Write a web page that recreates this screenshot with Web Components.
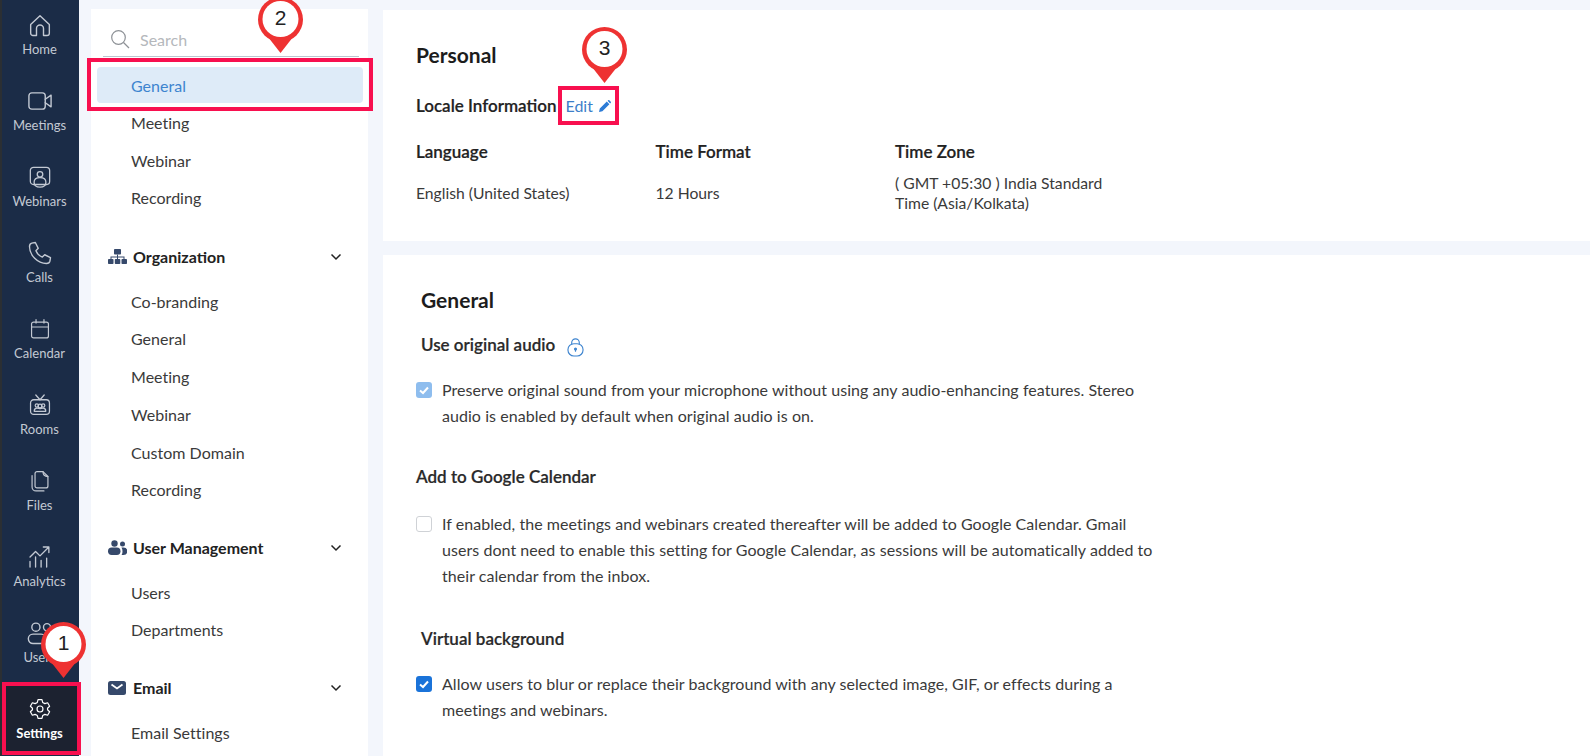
<!DOCTYPE html>
<html><head><meta charset="utf-8"><title>Settings</title>
<style>
html,body{margin:0;height:100%;overflow:hidden;background:#f3f6fc;font-family:Lato,"Noto Sans",sans-serif}
</style></head><body>
<app-shell>
  <nav-rail slot="rail">
    <rail-item label="Home" icon="home"></rail-item>
    <rail-item label="Meetings" icon="video"></rail-item>
    <rail-item label="Webinars" icon="webinar"></rail-item>
    <rail-item label="Calls" icon="phone"></rail-item>
    <rail-item label="Calendar" icon="cal"></rail-item>
    <rail-item label="Rooms" icon="tv"></rail-item>
    <rail-item label="Files" icon="files"></rail-item>
    <rail-item label="Analytics" icon="chart"></rail-item>
    <rail-item label="Users" icon="users"></rail-item>
    <rail-item label="Settings" icon="gear" active></rail-item>
  </nav-rail>
  <side-menu slot="menu">
    <search-box></search-box>
    <menu-link active>General</menu-link>
    <menu-link>Meeting</menu-link>
    <menu-link>Webinar</menu-link>
    <menu-link>Recording</menu-link>
    <menu-group label="Organization" icon="org" style="margin-top:20.7px">
      <menu-link>Co-branding</menu-link>
      <menu-link>General</menu-link>
      <menu-link>Meeting</menu-link>
      <menu-link>Webinar</menu-link>
      <menu-link>Custom Domain</menu-link>
      <menu-link>Recording</menu-link>
    </menu-group>
    <menu-group label="User Management" icon="people">
      <menu-link>Users</menu-link>
      <menu-link>Departments</menu-link>
    </menu-group>
    <menu-group label="Email" icon="mail">
      <menu-link>Email Settings</menu-link>
    </menu-group>
  </side-menu>
  <personal-card slot="main"></personal-card>
  <general-card slot="main"></general-card>
  <red-box slot="over" style="left:2px;top:682px;width:79px;height:73px"></red-box>
  <red-box slot="over" style="left:87px;top:58px;width:286px;height:53px"></red-box>
  <red-box slot="over" style="left:558px;top:86px;width:61px;height:39px"></red-box>
  <call-out slot="over" n="1" style="left:41px;top:622px"></call-out>
  <call-out slot="over" n="2" style="left:258px;top:-3px"></call-out>
  <call-out slot="over" n="3" style="left:582px;top:27px"></call-out>
</app-shell>
<script>
const sc=(s,b)=>`<g transform="translate(12 12) scale(${s}) translate(-12 -12)">${b}</g>`;
const ICONS={
home:'<path d="M4 11.500 12 4l8 7.500V19a2 2 0 0 1-2 2h-3v-6a3 3 0 0 0-6 0v6H6a2 2 0 0 1-2-2z"/>',
video:'<rect x="2.500" y="5" width="14" height="14" rx="2.500"/><path d="M16.500 10.500 21.500 7v10l-5-3.500"/>',
webinar:sc(.92,'<rect x="3" y="3" width="18" height="16" rx="3"/><circle cx="12" cy="9.500" r="2.600"/><path d="M6.500 17c0-3 2.500-4.500 5.500-4.500s5.500 1.500 5.500 4.500c0 3-2.500 4.500-5.500 4.500S6.500 20 6.500 17z"/>'),
phone:'<path d="M5 3.500 8 3l2.500 5-2 2c1 2.500 3 4.500 5.500 5.500l2-2 5 2.500-.5 3c-.3 1.500-1.500 2-3 2C10 21 3 14 3 6.500c0-1.500.5-2.700 2-3z"/>',
cal:sc(.85,'<rect x="3.500" y="5" width="17" height="16" rx="2"/><path d="M3.500 10h17M8 2.500V6M16 2.500V6"/>'),
tv:sc(.9,'<rect x="3" y="7" width="18" height="14" rx="3"/><path d="M8 2.500 12 7l4-4.500"/><circle cx="9" cy="12.500" r="1.600"/><circle cx="15" cy="12.500" r="1.600"/><circle cx="12" cy="13" r="1.800"/><path d="M6.500 18c0-2 1-3 2.500-3s2 .5 3 .5 1.500-.5 3-.5 2.500 1 2.500 3z"/>'),
files:sc(.85,'<path d="M9 2.500h6l5 5V17a2 2 0 0 1-2 2H9a2 2 0 0 1-2-2V4.500a2 2 0 0 1 2-2z"/><path d="M15 2.500c0 3 1.500 5 5 5"/><path d="M4 6.500V18a4 4 0 0 0 4 4h8"/>'),
chart:sc(.95,'<path d="M3 21v-5M8 21v-9M13 21v-6M18 21v-8M3 12l5-5 4 4 8-8M15 3h5v5"/>'),
users:'<circle cx="8.500" cy="7" r="3.500"/><circle cx="18" cy="7" r="3"/><rect x="2" y="13" width="15" height="8" rx="4"/><path d="M17 13h1.500a4 4 0 0 1 4 4"/>',
gear:sc(.85,'<circle cx="12" cy="12" r="3"/><path d="M10 2.500h4l.7 2.900 2.200 1.200 2.800-.9 2 3.500-2.100 2v1.600l2.100 2-2 3.500-2.800-.9-2.200 1.200-.7 2.900h-4l-.7-2.900-2.200-1.200-2.800.9-2-3.500 2.100-2v-1.600l-2.100-2 2-3.500 2.800.9 2.200-1.200z"/>')
};
const GROUP={
org:'<g fill="#36496b"><rect x="6" y="0" width="7" height="5.500" rx=".8"/><rect x="0" y="10" width="5.500" height="5" rx=".8"/><rect x="6.800" y="10" width="5.500" height="5" rx=".8"/><rect x="13.500" y="10" width="5.500" height="5" rx=".8"/><path d="M9 5.500h1v2h6.500v3h-1V8.500H10v2H9v-2H3.500v2h-1v-3H9z"/></g>',
people:'<g fill="#36496b"><circle cx="6.500" cy="3.500" r="3.200"/><circle cx="14.500" cy="4" r="2.500"/><rect x="0" y="7.500" width="12.500" height="7.500" rx="3.700"/><path d="M13.500 7.500h2a3.500 3.500 0 0 1 0 7.500h-2c.8-1 1-2.300 1-3.800s-.3-2.700-1-3.700z"/></g>',
mail:'<rect x="0" y="1" width="18" height="14" rx="2.500" fill="#36496b"/><path d="M3.500 4.500 9 8.500l5.500-4" fill="none" stroke="#fff" stroke-width="1.800"/>'
};
function el(tag,html){customElements.define(tag,class extends HTMLElement{
  connectedCallback(){if(!this.shadowRoot){this.attachShadow({mode:'open'}).innerHTML=typeof html==='function'?html(this):html}}
})}
el('app-shell',`<style>
:host{display:flex;width:1590px;height:756px;overflow:hidden;position:relative;background:#f3f6fc}
.menu{margin:9px 15px 0 12px;width:277px;flex:none;background:#fff;overflow:hidden}
.main{flex:1;min-width:0;display:flex;flex-direction:column;gap:14px;padding:10px 0 1px}
</style><slot name="rail"></slot><div class="menu"><slot name="menu"></slot></div><div class="main"><slot name="main"></slot></div><slot name="over"></slot>`);
el('nav-rail',`<style>
:host{display:flex;flex-direction:column;width:79px;flex:none;height:756px;overflow:hidden;background:#1b2c47;border-left:2px solid #2b2f33;box-sizing:border-box;padding-top:9px}
</style><slot></slot>`);
el('rail-item',h=>`<style>
:host{display:flex;flex:none;flex-direction:column;align-items:center;height:76px;box-sizing:border-box;padding-top:2px;color:#c3c9d3;font-size:13px;line-height:16px;margin-left:-2px}
:host([active]){background:#1c2230;color:#fff;font-weight:700;margin-top:-11px;height:73px;padding-top:13px;position:relative}
svg{width:28px;height:28px;fill:none;stroke:currentColor;stroke-width:1.200;stroke-linejoin:round;stroke-linecap:round;margin-bottom:2px}
</style><svg viewBox="0 0 24 24">${ICONS[h.getAttribute('icon')]}</svg><span>${h.getAttribute('label')}</span>`);
el('side-menu',`<style>:host{display:block}</style><slot></slot>`);
el('search-box',`<style>
:host{display:flex;align-items:center;margin:11px 9px 10px 12px;height:37px;border-bottom:1px solid #bcc4cf;color:#b5b8bc;font-size:16px;box-sizing:border-box;padding:2px 0 0 7px;gap:10px}
svg{width:20px;height:20px;fill:none;stroke:#8d9196;stroke-width:1.200}
</style><svg viewBox="0 0 20 20"><circle cx="8.500" cy="8.500" r="6.800"/><path d="M13.500 13.500 19 19"/></svg><span>Search</span>`);
el('menu-link',`<style>
:host{display:block;height:37.700px;line-height:37.700px;margin:0 6px;padding-left:34px;font-size:16px;letter-spacing:.02px;color:#3a3a3a;border-radius:4px;box-sizing:border-box}
:host([active]){background:#deebf8;color:#3d84cf;height:36px;line-height:37px;margin-bottom:1px;margin-right:5px}
</style><slot></slot>`);
el('menu-group',h=>`<style>
:host{display:block;margin-top:19.700px}
.t{display:flex;align-items:center;height:38px;padding:0 26px 0 17px;font-weight:700;font-size:16px;color:#222}
svg.i{width:19px;height:16px;margin-right:6px;flex:none}
.c{margin-left:auto;width:12px;height:8px;fill:none;stroke:#222;stroke-width:1.500}
.b{padding-top:7px}
</style><div class="t"><svg class="i" viewBox="0 0 19 16">${GROUP[h.getAttribute('icon')]}</svg><span>${h.getAttribute('label')}</span><svg class="c" viewBox="0 0 12 8"><path d="M1.500 1.500 6 6l4.500-4.500"/></svg></div><div class="b"><slot></slot></div>`);
el('personal-card',`<style>
:host{display:block;background:#fff;height:231px;box-sizing:border-box;padding:33px 33px;color:#222}
h2{margin:0;font-size:21px;line-height:24px;font-weight:700;color:#1c1c1c}
.l{display:flex;align-items:center;margin-top:29px;font-size:17px;line-height:20px;font-weight:600;-webkit-text-stroke:.2px currentColor}
.e{font-weight:400;font-size:16px;color:#3d7fc9;margin-left:9px;display:flex;align-items:center;gap:6px;-webkit-text-stroke:0}
.e svg{width:12px;height:12px}
.g{display:grid;grid-template-columns:239.500px 239.500px 230px;margin-top:26px;font-size:15.700px}
.g b{line-height:20px;color:#222;font-size:17px;font-weight:600;-webkit-text-stroke:.2px currentColor}
.g span{margin-top:21px;line-height:20px;color:#3a3a3a}
.g span.m{margin-top:11px;align-self:start}
</style><h2>Personal</h2><div class="l">Locale Information<span class="e">Edit <svg viewBox="0 0 12 12"><path fill="#2c7bd6" d="M0 12l.8-3.400L7.800 1.600l2.600 2.600-7 7zM8.600.8 9.300.2c.3-.3.7-.3 1 0l1.500 1.500c.3.300.3.700 0 1l-.7.700z"/></svg></span></div>
<div class="g"><b>Language</b><b>Time Format</b><b>Time Zone</b><span>English (United States)</span><span>12 Hours</span><span class="m">( GMT +05:30 ) India Standard<br>Time (Asia/Kolkata)</span></div>`);
el('general-card',`<style>
:host{display:block;background:#fff;flex:1;box-sizing:border-box;padding:33px 33px;color:#222}
h2{margin:0 0 0 5px;font-size:21px;line-height:24px;font-weight:700;color:#1c1c1c}
</style><h2>General</h2>
<setting-row style="margin-top:23px;--tx:5px;--g:22px" lock label="Use original audio" state="soft">Preserve original sound from your microphone without using any audio-enhancing features. Stereo<br>audio is enabled by default when original audio is on.</setting-row>
<setting-row style="margin-top:38px;--g:24px" label="Add to Google Calendar" state="off">If enabled, the meetings and webinars created thereafter will be added to Google Calendar. Gmail<br>users dont need to enable this setting for Google Calendar, as sessions will be automatically added to<br>their calendar from the inbox.</setting-row>
<setting-row style="margin-top:40px;--tx:5px;--g:22px" label="Virtual background" state="on">Allow users to blur or replace their background with any selected image, GIF, or effects during a<br>meetings and webinars.</setting-row>`);
el('setting-row',h=>{
 const s=h.getAttribute('state');
 const box=s==='off'?'<span class="c off"></span>':`<span class="c ${s}"><svg viewBox="0 0 16 16"><path d="M4 8.500 7 11l5-5.500" fill="none" stroke="#fff" stroke-width="2"/></svg></span>`;
 const lock=h.hasAttribute('lock')?'<svg class="lk" viewBox="0 0 18 20" fill="none" stroke="#3d84cf" stroke-width="1.200"><rect x="1" y="6" width="16" height="13" rx="6.300"/><path d="M5 6.500V4.800a4 4 0 0 1 8 0v1.700"/><circle cx="9" cy="11.500" r="1" fill="#3d84cf"/><path d="M9 12v2.500"/></svg>':'';
 return `<style>
:host{display:block;font-size:16px;letter-spacing:.05px}
.t{display:flex;align-items:center;font-size:17px;letter-spacing:0;font-weight:600;-webkit-text-stroke:.2px currentColor;line-height:20px;margin-left:var(--tx,0);color:#2a2a2a}
.lk{width:17px;height:19px;margin:3px 0 -3px 12px;align-self:flex-start}
.r{display:flex;gap:10px;margin-top:var(--g,17px);line-height:26px;color:#3a3a3a}
.c{width:16px;height:16px;border-radius:3px;flex:none;margin-top:5px;box-sizing:border-box;display:block}
.c svg{display:block}
.off{border:1px solid #cfd2d6;background:#fff}
.soft{background:#8ebdee}
.on{background:#1a73d9}
</style><div class="t">${h.getAttribute('label')}${lock}</div><div class="r">${box}<div><slot></slot></div></div>`});
el('call-out',h=>`<style>
:host{position:absolute;display:block;width:45px;height:56px;font-family:"Liberation Sans",sans-serif}
svg{position:absolute;inset:0;width:45px;height:56px}
span{position:absolute;left:0;right:0;top:8px;text-align:center;font-size:21px;line-height:26px;color:#222}
</style><svg viewBox="0 0 45 56"><circle cx="22.500" cy="22.500" r="22.500" fill="#ee3232"/><path d="M10 40h25L22.500 56z" fill="#ee3232"/><circle cx="22.500" cy="22" r="18" fill="#fff"/></svg><span>${h.getAttribute('n')}</span>`);
el('red-box',`<style>:host{position:absolute;display:block;border:4px solid #f8104f;box-sizing:border-box}</style>`);
</script>
</body></html>
